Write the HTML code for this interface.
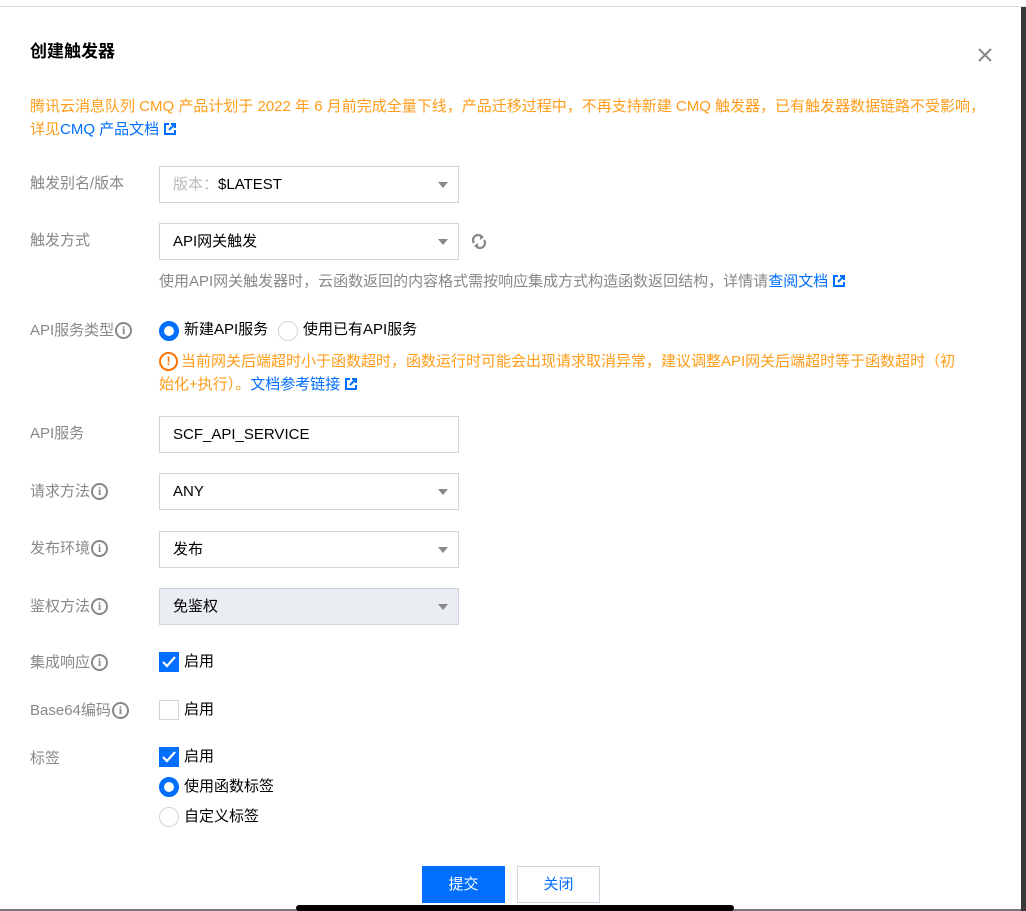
<!DOCTYPE html>
<html><head><meta charset="utf-8"><style>
*{box-sizing:border-box;margin:0;padding:0}
body{width:1026px;height:911px;background:#fff;position:relative;overflow:hidden;font-family:"Liberation Sans","Noto Sans CJK SC",sans-serif;font-size:15px;color:#000}
.a{position:absolute;white-space:nowrap}
.lbl{position:absolute;left:30px;color:#888;font-size:15px;line-height:20px}
.box{position:absolute;left:159px;width:300px;height:37px;border:1px solid #cfd5de;background:#fff;padding-left:13px;line-height:35px;font-size:15px;color:#000}
.arr{position:absolute;right:10px;top:15px;width:0;height:0;border-left:5px solid transparent;border-right:5px solid transparent;border-top:6px solid #888}
.info{display:inline-block;width:17px;height:17px;border:2px solid #888;border-radius:50%;font-size:12px;line-height:13px;text-align:center;color:#888;font-weight:bold;vertical-align:middle;position:relative;top:-1px;margin-left:1px;font-family:"Liberation Serif",serif}
.cb{position:absolute;left:159px;width:20px;height:20px}
.cbon{background:#006eff}
.cboff{border:1px solid #cfd5de}
.rad{position:absolute;width:20px;height:20px;border-radius:50%}
.ron{border:5px solid #006eff}
.roff{border:1px solid #cfd5de}
.txt{position:absolute;font-size:15px;line-height:20px;color:#000}
.ext{display:inline-block;width:12px;height:12px;vertical-align:-1px;margin-left:5px}
</style></head><body>
<div class="a" style="left:0;top:6px;width:1026px;height:1px;background:#ddd"></div>
<div class="a" style="left:1021px;top:7px;width:5px;height:904px;background:#3a3a3a"></div>
<div class="a" style="left:0;top:909px;width:1021px;height:2px;background:#777"></div>
<div class="a" style="left:296px;top:905px;width:438px;height:6px;background:#000;border-radius:3px"></div>

<div class="a" style="left:30px;top:40px;font-size:17px;font-weight:bold;line-height:24px">创建触发器</div>
<svg class="a" style="left:977px;top:47px" width="16" height="16" viewBox="0 0 16 16"><path d="M2 2L14 14M14 2L2 14" stroke="#888" stroke-width="2"/></svg>

<div class="a" style="left:30px;top:95px;color:#ff9c19;font-size:15px;line-height:23px">腾讯云消息队列 CMQ 产品计划于 2022 年 6 月前完成全量下线，产品迁移过程中，不再支持新建 CMQ 触发器，已有触发器数据链路不受影响，<br>详见<span style="color:#006eff">CMQ 产品文档</span><svg class="ext" viewBox="0 0 12 12"><path d="M5 1H1V11H11V7M7 1H11V5M11 1L5 7" stroke="#006eff" stroke-width="2" fill="none"/></svg></div>

<div class="lbl" style="top:174px">触发别名/版本</div>
<div class="box" style="top:166px;background:#fff"><span style="color:#bbb">版本：</span>$LATEST<div class="arr"></div></div>

<div class="lbl" style="top:231px">触发方式</div>
<div class="box" style="top:223px">API网关触发<div class="arr"></div></div>
<svg class="a" style="left:471px;top:233px" width="16" height="17" viewBox="0 0 16 17"><path d="M3 10A5 5 0 0 1 11 4M13 7A5 5 0 0 1 5 13" stroke="#888" stroke-width="2.2" fill="none"/><path d="M9 1L13 4L9 7Z M7 10L3 13L7 16Z" fill="#888"/></svg>
<div class="a" style="left:159px;top:272px;color:#888;font-size:15px;line-height:20px">使用API网关触发器时，云函数返回的内容格式需按响应集成方式构造函数返回结构，详情请<span style="color:#006eff">查阅文档</span><svg class="ext" viewBox="0 0 12 12"><path d="M5 1H1V11H11V7M7 1H11V5M11 1L5 7" stroke="#006eff" stroke-width="2" fill="none"/></svg></div>

<div class="lbl" style="top:321px">API服务类型<span class="info">i</span></div>
<div class="rad ron" style="left:159px;top:321px"></div>
<div class="txt" style="left:184px;top:320px">新建API服务</div>
<div class="rad roff" style="left:278px;top:321px"></div>
<div class="txt" style="left:303px;top:320px">使用已有API服务</div>
<div class="a" style="left:159px;top:352px;width:19px;height:19px;border:2px solid #ff7200;border-radius:50%;color:#ff7200;font-size:12px;font-weight:bold;text-align:center;line-height:15px">!</div>
<div class="a" style="left:159px;top:350px;color:#ff9c19;font-size:15px;line-height:23px;white-space:normal;width:830px"><span style="padding-left:22px"></span>当前网关后端超时小于函数超时，函数运行时可能会出现请求取消异常，建议调整API网关后端超时等于函数超时（初<br>始化+执行）。<span style="color:#006eff">文档参考链接</span><svg class="ext" viewBox="0 0 12 12"><path d="M5 1H1V11H11V7M7 1H11V5M11 1L5 7" stroke="#006eff" stroke-width="2" fill="none"/></svg></div>

<div class="lbl" style="top:424px">API服务</div>
<div class="box" style="top:416px">SCF_API_SERVICE</div>

<div class="lbl" style="top:482px">请求方法<span class="info">i</span></div>
<div class="box" style="top:473px">ANY<div class="arr"></div></div>

<div class="lbl" style="top:539px">发布环境<span class="info">i</span></div>
<div class="box" style="top:531px">发布<div class="arr"></div></div>

<div class="lbl" style="top:597px">鉴权方法<span class="info">i</span></div>
<div class="box" style="top:588px;background:#eaedf1">免鉴权<div class="arr"></div></div>

<div class="lbl" style="top:653px">集成响应<span class="info">i</span></div>
<div class="cb cbon" style="top:652px"><svg width="20" height="20"><path d="M4 10L8 14L16 5" stroke="#fff" stroke-width="2.2" fill="none"/></svg></div>
<div class="txt" style="left:184px;top:652px">启用</div>

<div class="lbl" style="top:701px">Base64编码<span class="info">i</span></div>
<div class="cb cboff" style="top:700px"></div>
<div class="txt" style="left:184px;top:700px">启用</div>

<div class="lbl" style="top:749px">标签</div>
<div class="cb cbon" style="top:747px"><svg width="20" height="20"><path d="M4 10L8 14L16 5" stroke="#fff" stroke-width="2.2" fill="none"/></svg></div>
<div class="txt" style="left:184px;top:747px">启用</div>
<div class="rad ron" style="left:159px;top:777px"></div>
<div class="txt" style="left:184px;top:777px">使用函数标签</div>
<div class="rad roff" style="left:159px;top:807px"></div>
<div class="txt" style="left:184px;top:807px">自定义标签</div>

<div class="a" style="left:422px;top:866px;width:83px;height:37px;background:#006eff;color:#fff;text-align:center;line-height:37px">提交</div>
<div class="a" style="left:517px;top:866px;width:83px;height:37px;border:1px solid #cfd5de;color:#006eff;text-align:center;line-height:35px">关闭</div>
</body></html>
